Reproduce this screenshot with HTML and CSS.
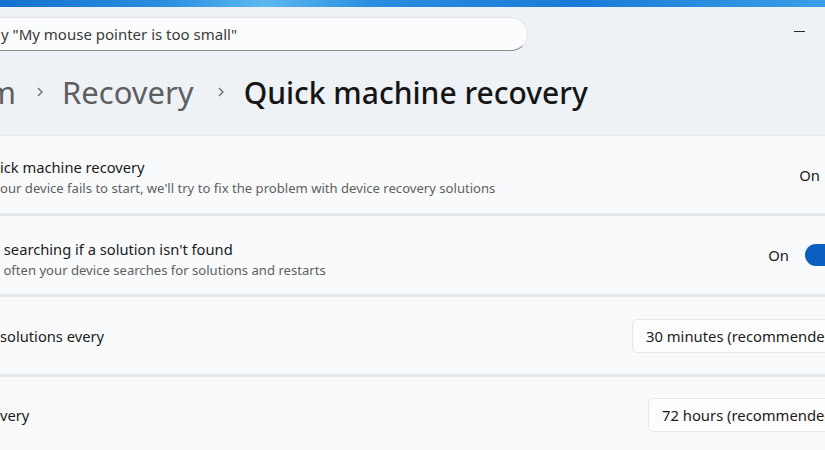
FILE: index.html
```html
<!DOCTYPE html>
<html lang="en">

<head>
    <meta charset="UTF-8">
    <meta name="viewport" content="width=device-width, initial-scale=1.0">
    <title>Quick machine recovery</title>
    <link rel="stylesheet" href="styles.css">
</head>

<body>
    <div class="wallpaper"></div>

    <div class="janela">
        <div class="topo">
            <div class="busca">y "My mouse pointer is too small"</div>
            <div class="minimizar"></div>
        </div>

        <div class="trilha">
            <span class="pai inicio">m</span>
            <svg class="seta" width="8" height="12" viewBox="0 0 8 12"><path d="M2 2l4 4-4 4" fill="none" stroke="#6b6b6b" stroke-width="1.3"/></svg>
            <span class="pai">Recovery</span>
            <svg class="seta ultima" width="8" height="12" viewBox="0 0 8 12"><path d="M2 2l4 4-4 4" fill="none" stroke="#6b6b6b" stroke-width="1.3"/></svg>
            <span class="atual">Quick machine recovery</span>
        </div>

        <div class="cartoes">
            <div class="cartao c1">
                <div class="texto">
                    <div class="titulo">ick machine recovery</div>
                    <div class="descricao">our device fails to start, we'll try to fix the problem with device recovery solutions</div>
                </div>
                <div class="estado primeiro">On</div>
            </div>

            <div class="cartao c2">
                <div class="texto">
                    <div class="titulo">&nbsp;searching if a solution isn't found</div>
                    <div class="descricao">&nbsp;often your device searches for solutions and restarts</div>
                </div>
                <div class="estado">On</div>
                <div class="chave"></div>
            </div>

            <div class="cartao c3">
                <div class="titulo">solutions every</div>
                <div class="seletor primeiro">30 minutes (recommended)</div>
            </div>

            <div class="cartao c4">
                <div class="titulo">very</div>
                <div class="seletor segundo">72 hours (recommended)</div>
            </div>
        </div>
    </div>
</body>

</html>
```

FILE: styles.css
```css
body {
    margin: 0;
    width: 825px;
    height: 450px;
    overflow: hidden;
    background-color: #eef2f7;
    font-family: "Noto Sans", "Open Sans", sans-serif;
    color: #1b1b1b;
}

.wallpaper {
    height: 7px;
    background: linear-gradient(100deg, #1670cf 0%, #2a8ee0 20%, #5db8f0 32%, #2a8de0 45%, #1b7ad8 70%, #3c9ee6 100%);
}

.janela {
    display: flex;
    flex-direction: column;
    overflow: hidden;
}

.topo {
    display: flex;
    justify-content: space-between;
    align-items: flex-start;
    height: 50px;
}

.busca {
    box-sizing: border-box;
    width: 568px;
    height: 34px;
    margin: 10px 0 0 -40px;
    padding-left: 40px;
    display: flex;
    align-items: center;
    background-color: #fbfcfd;
    border: 1px solid #e2e4e8;
    border-bottom-color: #8d8d8d;
    border-radius: 17px;
    font-size: 15px;
    color: #3a3a3a;
}

.minimizar {
    width: 11px;
    height: 1px;
    margin: 24px 20px 0 0;
    background-color: #2b2b2b;
}

.trilha {
    display: flex;
    align-items: center;
    height: 58px;
    margin-top: 6px;
    font-size: 31px;
    white-space: nowrap;
}

.pai {
    color: #5e5e5e;
}

.pai.inicio {
    margin-left: -13px;
}

.seta {
    margin: 0 18px 0 20px;
}

.seta.ultima {
    margin: 0 19px 0 23px;
}

.atual {
    font-size: 30px;
    font-weight: 500;
    color: #151515;
}

.cartoes {
    display: flex;
    flex-direction: column;
    gap: 3px;
    margin: 14px -40px 0 -40px;
    padding-top: 1px;
    background-color: #e5e8eb;
}

.cartao {
    display: flex;
    align-items: center;
    padding: 0 0 0 40px;
    background-color: #f9fafc;
}

.c1 {
    height: 77px;
}

.c2 {
    height: 78px;
}

.c3 {
    height: 77px;
}

.c4 {
    height: 76px;
}

.texto {
    display: flex;
    flex-direction: column;
    gap: 2px;
    flex-grow: 1;
    padding-top: 5px;
}

.c2 .texto {
    padding-top: 7px;
}

.titulo {
    flex-grow: 1;
    font-size: 14.7px;
    white-space: nowrap;
}

.descricao {
    font-size: 13.1px;
    color: #5f5f5f;
    white-space: nowrap;
}

.estado {
    font-size: 14.8px;
    margin-right: 14px;
}

.estado.primeiro {
    margin-right: 45px;
}

.c2 .estado {
    margin-right: 16px;
}

.chave {
    width: 44px;
    height: 22px;
    margin-right: 16px;
    border-radius: 11px;
    background-color: #0a5fc0;
}

.seletor {
    box-sizing: border-box;
    flex-shrink: 0;
    width: 250px;
    height: 34px;
    padding-left: 13px;
    display: flex;
    align-items: center;
    background-color: #fdfdfe;
    border: 1px solid #e6e7e9;
    border-radius: 5px;
    font-size: 14.8px;
    white-space: nowrap;
}

.seletor.primeiro {
    margin-right: -17px;
}

.seletor.segundo {
    margin-right: -33px;
}
```
